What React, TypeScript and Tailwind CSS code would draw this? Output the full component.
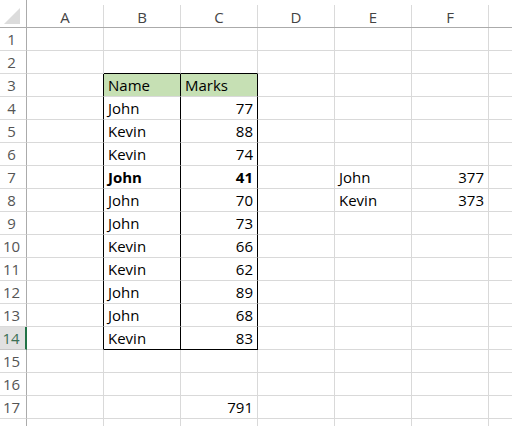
import clsx from "clsx";

type Row = {
  n: number;
  b?: string;
  c?: string;
  e?: string;
  f?: string;
  bold?: boolean;
  head?: boolean;
};

const marks: [string, string, boolean?][] = [
  ["John", "77"],
  ["Kevin", "88"],
  ["Kevin", "74"],
  ["John", "41", true],
  ["John", "70"],
  ["John", "73"],
  ["Kevin", "66"],
  ["Kevin", "62"],
  ["John", "89"],
  ["John", "68"],
  ["Kevin", "83"],
];

const rows: Row[] = Array.from({ length: 18 }, (_, i) => {
  const n = i + 1;
  const row: Row = { n };
  if (n === 3) {
    row.b = "Name";
    row.c = "Marks";
    row.head = true;
  }
  if (n >= 4 && n <= 14) {
    const [name, mark, bold] = marks[n - 4];
    row.b = name;
    row.c = mark;
    row.bold = bold;
  }
  if (n === 7) {
    row.e = "John";
    row.f = "377";
  }
  if (n === 8) {
    row.e = "Kevin";
    row.f = "373";
  }
  if (n === 17) row.c = "791";
  return row;
});

const inTable = (n: number) => n >= 3 && n <= 14;

const Cell = ({
  children,
  right,
  className,
}: {
  children?: React.ReactNode;
  right?: boolean;
  className?: string;
}) => (
  <div
    className={clsx(
      "h-[23px] w-[77px] shrink-0 border-r border-b border-[#d9d9d9] px-[4px] flex items-center whitespace-nowrap overflow-hidden",
      right ? "justify-end" : "justify-start",
      className
    )}
  >
    {children}
  </div>
);

export default function App() {
  return (
    <div
      className="w-[512px] h-[426px] overflow-hidden bg-white text-black text-[15px] leading-none"
      style={{ fontFamily: '"Open Sans", "Liberation Sans", sans-serif' }}
    >
      {/* column headers */}
      <div className="flex h-[28px] border-b border-[#ababab]">
        <div className="w-[27px] shrink-0 border-r border-[#ababab] flex items-end justify-center pb-[2px]">
          <div className="w-[16px] h-[16px] mb-[1px] mr-[2px] bg-[#dcdcdc] [clip-path:polygon(100%_0,100%_100%,0_100%)]" />
        </div>
        {["A", "B", "C", "D", "E", "F", ""].map((l, i) => (
          <div key={i} className="w-[77px] shrink-0 flex flex-col">
            <div className="h-[5px]" />
            <div className="flex-1 border-r border-[#dadada] flex items-center justify-center text-[#444] pt-[2px]">
              {l}
            </div>
          </div>
        ))}
      </div>

      {rows.map((r) => (
        <div key={r.n} className="flex">
          <div
            className={clsx(
              "w-[27px] h-[23px] shrink-0 border-b flex items-center justify-center pr-[3px]",
              r.n === 14
                ? "bg-[#e1e1e1] border-r-2 border-r-[#217346] border-b-[#c6c6c6] text-[#3b6f55]"
                : "border-r border-r-[#ababab] border-b-[#dadada] text-[#555]"
            )}
          >
            {r.n < 18 ? r.n : ""}
          </div>
          <Cell className={clsx(inTable(r.n) && "border-r-black")} />
          <Cell
            className={clsx(
              inTable(r.n) && "border-r-black",
              (r.n === 2 || r.n === 14) && "border-b-black",
              r.head && "bg-[#c6e0b4]",
              r.bold && "font-bold"
            )}
          >
            {r.b}
          </Cell>
          <Cell
            right={!r.head}
            className={clsx(
              inTable(r.n) && "border-r-black",
              (r.n === 2 || r.n === 14) && "border-b-black",
              r.head && "bg-[#c6e0b4]",
              r.bold && "font-bold"
            )}
          >
            {r.c}
          </Cell>
          <Cell />
          <Cell>{r.e}</Cell>
          <Cell right>{r.f}</Cell>
          <Cell />
        </div>
      ))}
    </div>
  );
}
